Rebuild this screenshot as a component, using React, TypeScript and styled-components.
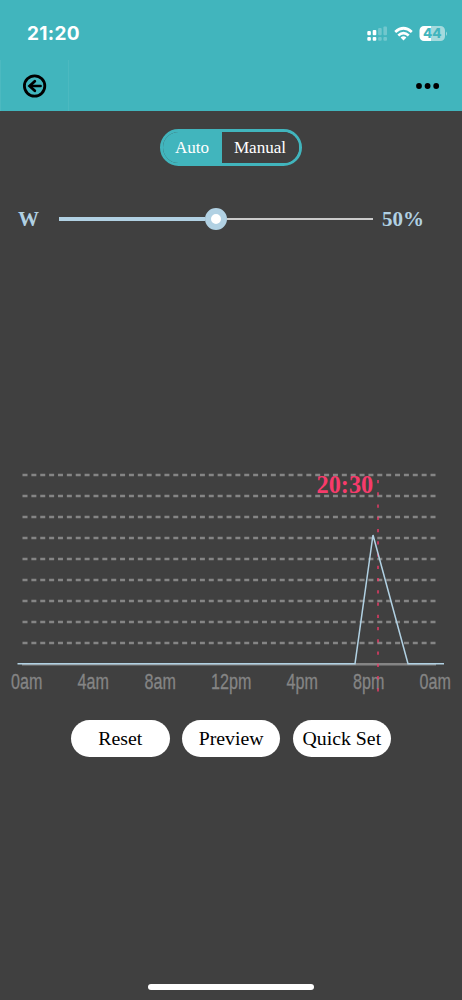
import React from 'react';
import styled, { createGlobalStyle } from 'styled-components';

const TEAL = '#41b5bd';
const DARK = '#404040';
const ICE = '#b1d1e3';

const GlobalStyle = createGlobalStyle`
  * { box-sizing: border-box; }
  body { margin: 0; background: ${DARK}; font-family: 'Liberation Serif', 'Times New Roman', serif; }
  button { font-family: inherit; border: 0; padding: 0; cursor: pointer; }
  svg { display: block; }
`;

const Screen = styled.div`
  width: 462px;
  height: 1000px;
  display: flex;
  flex-direction: column;
  background: ${DARK};
  overflow: hidden;
`;

const Header = styled.header`
  background: ${TEAL};
  height: 111px;
  flex: none;
`;

const StatusBar = styled.div`
  height: 60px;
  padding: 8px 14px 0 27px;
  display: flex;
  align-items: center;
  justify-content: space-between;
`;

const Clock = styled.span`
  font: 700 19px/24px Inter, sans-serif;
  letter-spacing: 0.3px;
  color: #fff;
`;

const NavBar = styled.nav`
  height: 51px;
  display: flex;
  justify-content: space-between;
`;

const BackButton = styled.button`
  width: 69px;
  height: 51px;
  padding-left: 22px;
  background: transparent;
  border: solid rgba(255, 255, 255, 0.06);
  border-width: 0 1px;
`;

const MoreButton = styled.button`
  width: 70px;
  padding-left: 23px;
  background: transparent;
`;

const Segmented = styled.div`
  width: 142px;
  height: 37px;
  margin: 18px 0 0 160px;
  flex: none;
  display: flex;
  border: 3px solid ${TEAL};
  border-radius: 19px;
  overflow: hidden;
`;

const Segment = styled.button<{ $active?: boolean }>`
  width: ${(p) => (p.$active ? '59px' : '77px')};
  padding-right: 1px;
  background: ${(p) => (p.$active ? TEAL : DARK)};
  color: #fff;
  font-size: 17.1px;
  line-height: 31px;
`;

const SliderRow = styled.div`
  height: 30px;
  margin-top: 38px;
  padding-left: 18px;
  display: flex;
  align-items: center;
  flex: none;
  color: ${ICE};
  font-size: 21px;
  font-weight: 700;
`;

const ChannelName = styled.span`
  width: 41px;
`;

const Track = styled.div`
  width: 314px;
  margin-right: 9px;
  display: flex;
  align-items: center;
`;

const Filled = styled.div`
  width: 146px;
  height: 4px;
  background: ${ICE};
`;

const Thumb = styled.div`
  width: 22px;
  height: 22px;
  border: 6px solid ${ICE};
  border-radius: 50%;
  background: #fff;
`;

const Rest = styled.div`
  flex: 1;
  height: 2.5px;
  background: #cbcbcb;
`;

const ChartArea = styled.div`
  height: 240px;
  margin-top: 226px;
  flex: none;
`;

const Actions = styled.div`
  margin: 20px 0 0 71px;
  display: flex;
  gap: 12.2px;
`;

const Action = styled.button`
  width: 98.6px;
  height: 37px;
  border-radius: 19px;
  background: #fff;
  color: #000;
  font-size: 19.8px;
  line-height: 37px;
`;

const HomeIndicator = styled.div`
  width: 166px;
  height: 6px;
  margin: auto auto 10px;
  border-radius: 3px;
  background: #fff;
`;

const StatusIcons = () => (
  <svg width="82" height="20" viewBox="366 24 82 20">
    <g fill="#fff">
      <rect x="367.3" y="31" width="3.6" height="4.2" rx="1" />
      <rect x="372.7" y="30" width="3.6" height="5.2" rx="1" />
      <rect x="367.3" y="37" width="3.6" height="3.8" rx="1" />
      <rect x="372.7" y="37" width="3.6" height="3.8" rx="1" />
      <g opacity="0.25">
        <rect x="378.1" y="28" width="3.6" height="7.2" rx="1" />
        <rect x="383.4" y="26.5" width="3.6" height="8.7" rx="1" />
        <rect x="378.1" y="37" width="3.6" height="3.8" rx="1" />
        <rect x="383.4" y="37" width="3.6" height="3.8" rx="1" />
      </g>
    </g>
    <g fill="none" stroke="#fff" strokeWidth="2.7">
      <path d="M395.2 32 Q403.5 24.5 411.8 32" />
      <path d="M398.3 35.4 Q403.5 30.8 408.7 35.4" />
    </g>
    <path d="M403.5 40.5 L400.6 37.5 Q403.5 35.1 406.4 37.5 Z" fill="#fff" />
    <path d="M424 26 H431 V41 H424 A4.5 4.5 0 0 1 419.5 36.5 V30.5 A4.5 4.5 0 0 1 424 26 Z" fill="#fff" />
    <path d="M431 26 H440.5 A4.5 4.5 0 0 1 445 30.5 V36.5 A4.5 4.5 0 0 1 440.5 41 H431 Z" fill="#a5dadd" />
    <path d="M446 31.5 Q448 33.5 446 36 Z" fill="#a5dadd" />
    <text x="432.2" y="38.4" textAnchor="middle" fontFamily="Inter, sans-serif" fontWeight="800" fontSize="13.5" fill={TEAL}>44</text>
  </svg>
);

const BackIcon = () => (
  <svg width="24" height="24" viewBox="0 0 24 24" fill="none" stroke="#000">
    <circle cx="11.6" cy="12" r="10.2" strokeWidth="2.8" />
    <path d="M17.6 12 H7" strokeWidth="2.6" strokeLinecap="round" />
    <path d="M11.8 7.2 L6.6 12 L11.8 16.8" strokeWidth="2.8" strokeLinecap="round" />
  </svg>
);

const gridRows = [475, 496, 517, 538, 559, 580, 601, 622, 643];
const hours = [
  { x: 11, label: '0am' },
  { x: 77.5, label: '4am' },
  { x: 144.5, label: '8am' },
  { x: 211, label: '12pm' },
  { x: 286.5, label: '4pm' },
  { x: 353, label: '8pm' },
  { x: 419.5, label: '0am' },
];

const ScheduleChart = () => (
  <svg width="462" height="240" viewBox="0 460 462 240">
    {gridRows.map((y) => (
      <line key={y} x1="22.5" x2="436" y1={y} y2={y} stroke="#858585" strokeWidth="2.5" strokeDasharray="5 3.87" />
    ))}
    <line x1="22" x2="436" y1="664.3" y2="664.3" stroke="#858585" strokeWidth="2.5" />
    {hours.map(({ x, label }) => (
      <text key={x} transform={`translate(${x} 688.6) scale(0.74 1)`} fontFamily="'Liberation Sans', Arial, sans-serif" fontSize="21.8" fill="#858585" stroke="#858585" strokeWidth="0.3">
        {label}
      </text>
    ))}
    <line x1="378" x2="378" y1="480" y2="692" stroke="#f73b6b" strokeWidth="1.6" strokeDasharray="3.2 9.05" opacity="0.85" />
    <path d="M17.5 663.7 H355 L373 535 L408 663.7 H444" fill="none" stroke={ICE} strokeWidth="1.5" />
    <text x="316.5" y="493" fontFamily="'Liberation Serif', serif" fontWeight="700" fontSize="24.3" fill="#f73b6b">20:30</text>
  </svg>
);

export default function App() {
  return (
    <Screen>
      <GlobalStyle />
      <Header>
        <StatusBar>
          <Clock>21:20</Clock>
          <StatusIcons />
        </StatusBar>
        <NavBar>
          <BackButton aria-label="Back"><BackIcon /></BackButton>
          <MoreButton aria-label="More">
            <svg width="26" height="8" viewBox="0 0 26 8">
              <circle cx="4" cy="4" r="2.9" />
              <circle cx="12.6" cy="4" r="2.9" />
              <circle cx="21.2" cy="4" r="2.9" />
            </svg>
          </MoreButton>
        </NavBar>
      </Header>
      <Segmented>
        <Segment $active>Auto</Segment>
        <Segment>Manual</Segment>
      </Segmented>
      <SliderRow>
        <ChannelName>W</ChannelName>
        <Track>
          <Filled />
          <Thumb />
          <Rest />
        </Track>
        <span>50%</span>
      </SliderRow>
      <ChartArea><ScheduleChart /></ChartArea>
      <Actions>
        <Action>Reset</Action>
        <Action>Preview</Action>
        <Action>Quick Set</Action>
      </Actions>
      <HomeIndicator />
    </Screen>
  );
}
